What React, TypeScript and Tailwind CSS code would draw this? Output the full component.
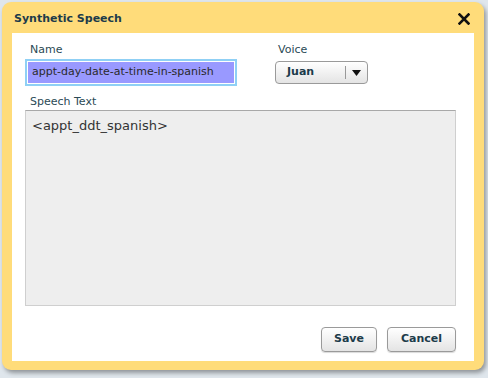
import React from "react";

export default function App() {
  const font = { fontFamily: '"DejaVu Sans", Verdana, sans-serif' };
  return (
    <div className="w-[488px] h-[378px] bg-[#dfe6ec] relative overflow-hidden" style={font}>
      <div className="absolute left-[2px] top-[2px] w-[482px] h-[368px] bg-[#ffdc7a] rounded-[9px] shadow-[2px_3px_4px_rgba(0,0,0,0.35)] flex flex-col px-[10px] pb-[9px]">
        <div className="h-[31px] flex items-center justify-between pl-[2px] pr-[4px]">
          <span className="text-[11px] font-bold text-[#1d3b4a] mt-[3px]">Synthetic Speech</span>
          <svg width="12" height="12" viewBox="0 0 12 12" className="mt-[3px]">
            <path d="M1.5 1.5 L10.5 10.5 M10.5 1.5 L1.5 10.5" stroke="#111" strokeWidth="2.6" strokeLinecap="square" />
          </svg>
        </div>
        <div className="flex-1 bg-white flex flex-col pl-[13px] pr-[18px] pt-[10px]">
          <div className="flex">
            <div className="flex flex-col w-[250px]">
              <span className="text-[11px] text-[#2b4a55] pl-[5px] leading-[14px]">Name</span>
              <div className="mt-[2px] w-[212px] h-[27px] border-2 border-[#8fd0f5] p-[1px]">
                <div className="w-full h-full bg-[#9999ff] flex items-center pl-[4px] text-[11px] text-[#2a2a2a]">
                  appt-day-date-at-time-in-spanish
                </div>
              </div>
            </div>
            <div className="flex flex-col">
              <span className="text-[11px] text-[#2b4a55] pl-[3px] leading-[14px]">Voice</span>
              <div className="mt-[4px] w-[93px] h-[23px] rounded-[4px] border border-[#9a9a9a] bg-gradient-to-b from-[#ffffff] to-[#e4e4e4] flex items-center">
                <span className="text-[11px] font-bold text-[#1d3b4a] pl-[11px] w-[69px]">Juan</span>
                <div className="w-px h-[13px] bg-[#999]" />
                <svg width="9" height="6" viewBox="0 0 9 6" className="ml-[6px]">
                  <path d="M0 0 H9 L4.5 6 Z" fill="#111" />
                </svg>
              </div>
            </div>
          </div>
          <span className="text-[11px] text-[#2b4a55] pl-[5px] mt-[9px] leading-[14px]">Speech Text</span>
          <div className="mt-[1px] w-[431px] h-[196px] bg-[#eeeeee] border border-[#cfcfcf] border-t-[#a8a8a8] pl-[6px] pt-[5px] text-[13px] text-[#333]">
            &lt;appt_ddt_spanish&gt;
          </div>
          <div className="flex justify-end gap-[10px] mt-[21px]">
            <button className="w-[56px] h-[25px] rounded-[4px] border border-[#9a9a9a] bg-gradient-to-b from-[#ffffff] to-[#e4e4e4] text-[11px] font-bold text-[#1d3b4a] shadow-[0_1px_1px_rgba(0,0,0,0.15)]">Save</button>
            <button className="w-[69px] h-[25px] rounded-[4px] border border-[#9a9a9a] bg-gradient-to-b from-[#ffffff] to-[#e4e4e4] text-[11px] font-bold text-[#1d3b4a] shadow-[0_1px_1px_rgba(0,0,0,0.15)]">Cancel</button>
          </div>
        </div>
      </div>
    </div>
  );
}
